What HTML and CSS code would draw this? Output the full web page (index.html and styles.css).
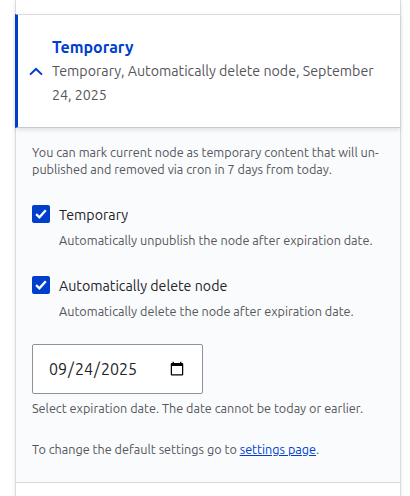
FILE: index.html
```html
<!DOCTYPE html>
<html lang="en">
<head>
<meta charset="utf-8">
<title>Temporary</title>
<link rel="stylesheet" href="styles.css">
</head>
<body>
<main class="accordion">
  <div class="previous"></div>
  <section class="details">
    <header class="summary">
      <svg class="chevron" width="14" height="9" viewBox="0 0 14 9"><path d="M1 7.6 7 1.9l6 5.7" fill="none" stroke="#003ecc" stroke-width="2"/></svg>
      <div>
        <h2 class="title">Temporary</h2>
        <p class="status">Temporary, Automatically delete node, September<br>24, 2025</p>
      </div>
    </header>
    <div class="content">
      <p class="help intro">You can mark current node as temporary content that will un-<br>published and removed via cron in 7 days from today.</p>
      <div class="option">
        <span class="checkbox"><svg width="18" height="18" viewBox="0 0 18 18"><path d="M4.1 9.2 7.4 12.3 13.8 5.2" fill="none" stroke="#fff" stroke-width="2.3"/></svg></span>
        <span class="label">Temporary</span>
        <p class="help hint">Automatically unpublish the node after expiration date.</p>
      </div>
      <div class="option">
        <span class="checkbox"><svg width="18" height="18" viewBox="0 0 18 18"><path d="M4.1 9.2 7.4 12.3 13.8 5.2" fill="none" stroke="#fff" stroke-width="2.3"/></svg></span>
        <span class="label">Automatically delete node</span>
        <p class="help hint">Automatically delete the node after expiration date.</p>
      </div>
      <input class="date" type="date" value="2025-09-24" aria-label="Expiration date">
      <p class="help date-help">Select expiration date. The date cannot be today or earlier.</p>
      <p class="help settings">To change the default settings go to <a href="#">settings page</a>.</p>
    </div>
  </section>
</main>
</body>
</html>
```
FILE: styles.css
```css
* { box-sizing: border-box; }
body {
  margin: 0;
  background: #fff;
  color: #232429;
  font-family: Ubuntu, "Noto Sans", sans-serif;
  font-size: 14.22px;
  overflow: hidden;
}
h2, p { margin: 0; }
.accordion {
  width: 386px;
  height: 496px;
  margin-left: 15px;
  border: solid #d9dadf;
  border-width: 0 1px;
  box-shadow: 0 2px 4px rgba(0, 0, 0, .1);
}
.previous { height: 14px; }
.details {
  height: 469px;
  border: solid #d9dadf;
  border-width: 1px 0;
  background: #fafbfd;
}
.summary {
  display: flex;
  align-items: center;
  gap: 9px;
  height: 114px;
  margin: -1px 0 0 -1px;
  padding-left: 11px;
  border-left: 3px solid #003ecc;
  border-top: 1px solid #d9dadf;
  border-bottom: 1px solid #c8c9cb;
  background: #fff;
  box-shadow: 0 2px 4px rgba(0, 0, 0, .1);
}
.title {
  color: #003ecc;
  font-size: 16px;
  line-height: 24px;
  font-weight: 700;
}
.status { color: #55565b; line-height: 24px; white-space: nowrap; }
.content { padding: 16px 0 0 16px; }
.help {
  color: #55565b;
  font-size: 12.64px;
  line-height: 17px;
  white-space: nowrap;
}
.intro { margin-bottom: 26px; }
.option {
  display: grid;
  grid-template-columns: 18px 1fr;
  column-gap: 9px;
  height: 71px;
  align-content: start;
}
.checkbox {
  width: 18px;
  height: 18px;
  margin-top: 1px;
  border-radius: 2px;
  background: #003ecc;
}
.checkbox svg { display: block; }
.label { line-height: 23px; }
.hint { grid-column: 2; margin-top: 5px; }
.date {
  display: block;
  width: 171px;
  height: 50px;
  margin: -2px 0 0;
  padding: 0 15px;
  border: 1px solid #8e929c;
  border-radius: 2px;
  background: #fff;
  color: #232429;
  font: 16px Ubuntu, "Noto Sans", sans-serif;
}
.date-help { margin-top: 6px; }
.settings { margin-top: 24px; }
.settings a { color: #003ecc; }
```
